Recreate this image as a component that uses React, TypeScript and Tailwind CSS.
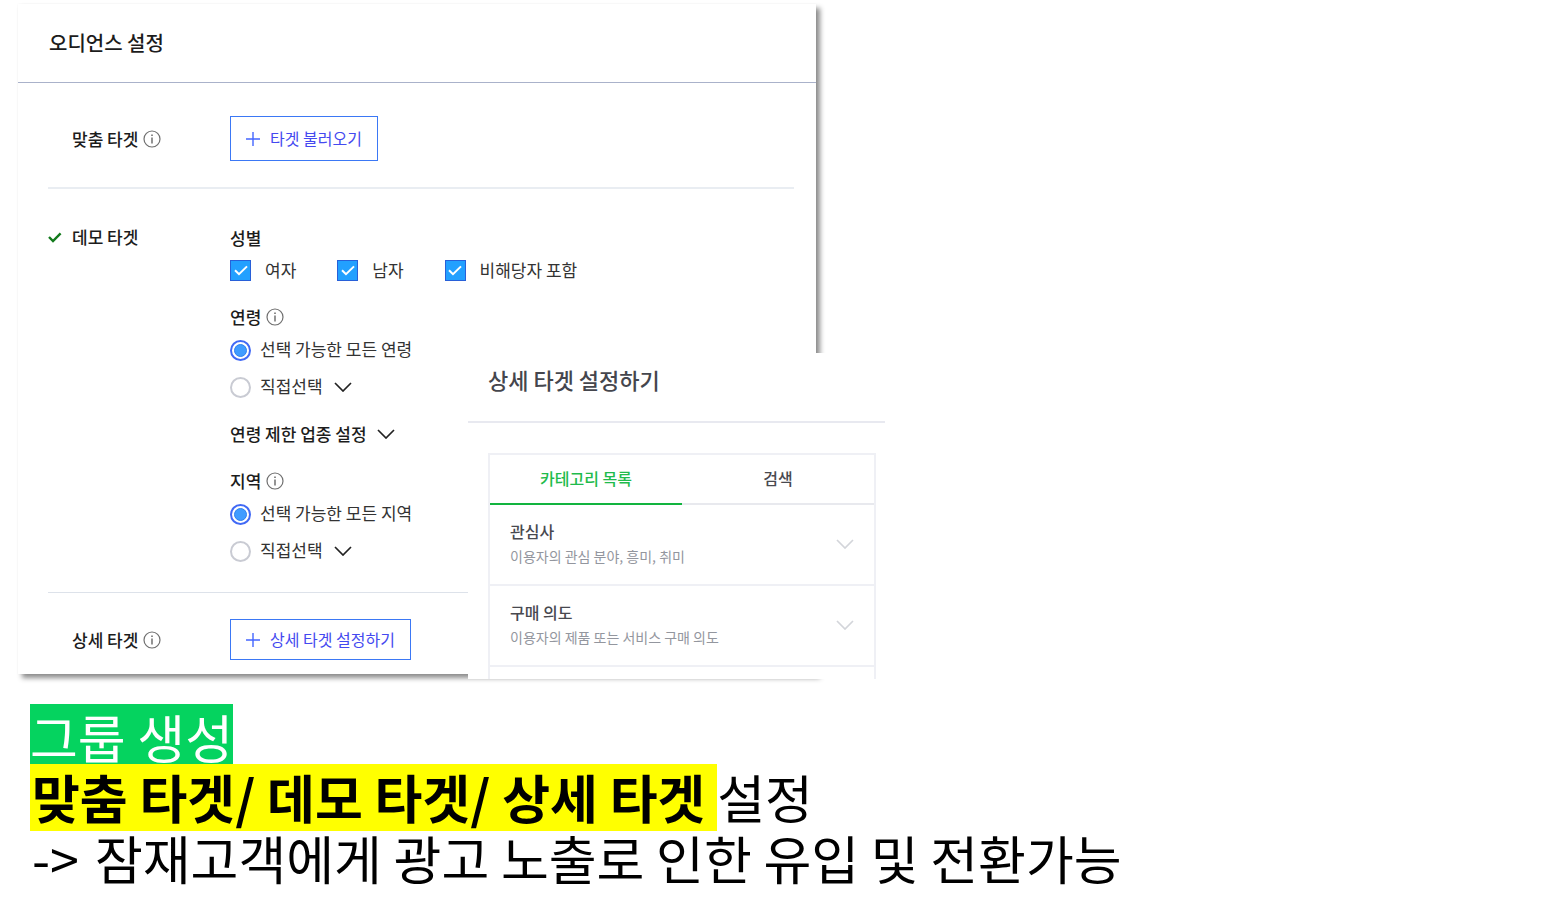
import React, { useState } from "react";

function InfoIcon() {
  return (
    <svg viewBox="0 0 18 18" className="size-[18px] shrink-0" fill="none" aria-hidden="true">
      <circle cx="9" cy="9" r="8" stroke="#6f6f6f" strokeWidth="1.2" />
      <path d="M9 7.4v6" stroke="#666" strokeWidth="1.4" />
      <path d="M9 4.4v1.6" stroke="#666" strokeWidth="1.5" />
    </svg>
  );
}

function ChevronIcon({ className }: { className: string }) {
  return (
    <svg viewBox="0 0 18 10" className={className} fill="none" aria-hidden="true">
      <path d="M1 1l8 8 8-8" stroke="currentColor" strokeWidth="1.7" />
    </svg>
  );
}

function PlusIcon() {
  return (
    <svg viewBox="0 0 16 16" className="size-4 shrink-0" fill="none" aria-hidden="true">
      <path d="M1 8h14M8 1v14" stroke="#4466ff" strokeWidth="1.4" />
    </svg>
  );
}

function CheckOption({ label }: { label: string }) {
  const [checked, setChecked] = useState(true);
  return (
    <label className="flex items-center gap-[14px]">
      <span className="grid size-[21px] place-items-center">
        <input
          type="checkbox"
          checked={checked}
          onChange={(e) => setChecked(e.target.checked)}
          className="col-start-1 row-start-1 size-[21px] appearance-none border border-[#2860d8] bg-white checked:bg-[#22a0ff]"
        />
        {checked && (
          <svg viewBox="0 0 14 11" className="pointer-events-none col-start-1 row-start-1 h-[11px] w-[14px]" fill="none" aria-hidden="true">
            <path d="M1 5.2l4 4L13 1.4" stroke="#fff" strokeWidth="2" />
          </svg>
        )}
      </span>
      {label}
    </label>
  );
}

function RadioOption({ name, label, defaultChecked }: { name: string; label: string; defaultChecked?: boolean }) {
  return (
    <label className="flex items-center gap-[9px]">
      <input
        type="radio"
        name={name}
        defaultChecked={defaultChecked}
        className="grid size-[21px] appearance-none place-items-center rounded-full border-2 border-[#c9cbd3] bg-white before:size-[13px] before:rounded-full before:content-[''] checked:border-[#4169f5] checked:before:border checked:before:border-[#2f7fee] checked:before:bg-[#409cff]"
      />
      <span className="pb-0.5">{label}</span>
    </label>
  );
}

function RangeField({ title, name, allLabel }: { title: string; name: string; allLabel: string }) {
  return (
    <fieldset>
      <legend className="flex h-6 items-center gap-[5px] font-medium text-[#1c1c1c]">
        {title}
        <InfoIcon />
      </legend>
      <div className="mt-[9px] flex h-6 items-center">
        <RadioOption name={name} label={allLabel} defaultChecked />
      </div>
      <div className="mt-[13px] flex h-6 items-center gap-[11px]">
        <RadioOption name={name} label="직접선택" />
        <ChevronIcon className="h-[10px] w-[18px] text-[#222]" />
      </div>
    </fieldset>
  );
}

function RowLabel({ text, checked, info }: { text: string; checked?: boolean; info?: boolean }) {
  return (
    <div className="flex h-6 w-[182px] shrink-0 items-center font-medium text-[#1c1c1c]">
      <span className="w-6">
        {checked && (
          <svg viewBox="0 0 14 11" className="h-[11px] w-[14px]" fill="none" aria-hidden="true">
            <path d="M1 5l4 4 7.6-7.6" stroke="#127a1c" strokeWidth="2.4" />
          </svg>
        )}
      </span>
      <span className="mr-[5px]">{text}</span>
      {info && <InfoIcon />}
    </div>
  );
}

function Category({ title, description }: { title: string; description: string }) {
  return (
    <button type="button" className="flex h-[81px] w-full items-center justify-between border-b-2 border-[#eff0f5] px-5 pb-0.5 text-left">
      <span className="flex flex-col">
        <span className="text-[16px] leading-[26px] font-medium text-[#48494f]">{title}</span>
        <span className="text-[14px] leading-[25px] text-[#93969e]">{description}</span>
      </span>
      <ChevronIcon className="h-[10px] w-[18px] text-[#d3d5da]" />
    </button>
  );
}

function DetailPanel() {
  return (
    <section className="absolute top-[349px] left-[450px] h-[326px] w-[417px] overflow-hidden bg-white">
      <h2 className="flex h-[70px] items-center border-b-2 border-[#e8e9f0] px-5 pb-4 text-[22px] font-medium text-[#45464d]">
        상세 타겟 설정하기
      </h2>
      <div className="mt-[30px] mr-[9px] ml-5 border-2 border-b-0 border-[#eff0f5]">
        <div role="tablist" className="grid grid-cols-2 text-[16px] font-medium">
          <button type="button" role="tab" aria-selected="true" className="h-[50px] border-b-2 border-[#12b43f] pb-0.5 text-[#1fbb4c]">
            카테고리 목록
          </button>
          <button type="button" role="tab" aria-selected="false" className="h-[50px] border-b-2 border-[#e8e9ee] pb-0.5 text-[#48494f]">
            검색
          </button>
        </div>
        <Category title="관심사" description="이용자의 관심 분야, 흥미, 취미" />
        <Category title="구매 의도" description="이용자의 제품 또는 서비스 구매 의도" />
        <div className="h-4" />
      </div>
    </section>
  );
}

export default function App() {
  return (
    <main className="min-h-screen bg-white pt-1 pl-[18px] font-['Noto_Sans_CJK_KR',sans-serif] text-[17px] leading-6 text-[#333]">
      <div className="relative max-w-[798px] bg-white pb-[14px] shadow-[4px_4px_5px_rgba(0,0,0,0.45),0_0_2px_rgba(0,0,0,0.04)]">
        <h1 className="flex h-[79px] items-center border-b border-[#aab2ca] pl-[31px] text-[20px] font-medium text-[#1c1c1c]">오디언스 설정</h1>

        <div className="pr-[22px] pl-[30px]">
          <div className="flex items-center border-b-2 border-[#e9edf2] pt-[33px] pb-[26px]">
            <RowLabel text="맞춤 타겟" info />
            <button type="button" className="flex h-[45px] items-center gap-[9px] border border-[#3b78f5] pr-[15px] pl-[14px] text-[16px] text-[#4449f0]">
              <PlusIcon />
              <span className="pb-0.5">타겟 불러오기</span>
            </button>
          </div>

          <div className="flex border-b border-[#dde2ea] pt-9 pb-[29px]">
            <RowLabel text="데모 타겟" checked />
            <div className="flex flex-col gap-[23px] pt-px">
              <fieldset>
                <legend className="flex h-6 items-center font-medium text-[#1c1c1c]">성별</legend>
                <div className="mt-2 flex h-6 items-center gap-[41px]">
                  <CheckOption label="여자" />
                  <CheckOption label="남자" />
                  <CheckOption label="비해당자 포함" />
                </div>
              </fieldset>
              <RangeField title="연령" name="age" allLabel="선택 가능한 모든 연령" />
              <button type="button" className="flex h-6 items-center gap-[10px] font-medium text-[#1c1c1c]">
                연령 제한 업종 설정
                <ChevronIcon className="h-[10px] w-[18px] text-[#222]" />
              </button>
              <RangeField title="지역" name="region" allLabel="선택 가능한 모든 지역" />
            </div>
          </div>

          <div className="flex items-center pt-[26px]">
            <RowLabel text="상세 타겟" info />
            <button type="button" className="flex h-[41px] items-center gap-[9px] border border-[#3b78f5] pr-[15px] pl-[14px] text-[16px] text-[#4449f0]">
              <PlusIcon />
              <span className="pb-0.5">상세 타겟 설정하기</span>
            </button>
          </div>
        </div>

        <DetailPanel />
      </div>

      <div className="mt-[30px] pl-3 text-[52px] leading-[60px] text-black">
        <p className="flex">
          <span className="h-[60px] bg-[#05d35f] pt-[3px] text-white">그룹 생성</span>
        </p>
        <p className="flex">
          <strong className="h-[67px] bg-[#ffff00] pt-[3px] pl-0.5 font-bold whitespace-pre">맞춤 타겟/ 데모 타겟/ 상세 타겟 </strong>
          <span className="pt-[3px]">설정</span>
        </p>
        <p className="flex gap-4 pl-0.5 leading-[54px]">
          <span>-&gt;</span>
          <span>잠재고객에게 광고 노출로 인한 유입 및 전환가능</span>
        </p>
      </div>
    </main>
  );
}
